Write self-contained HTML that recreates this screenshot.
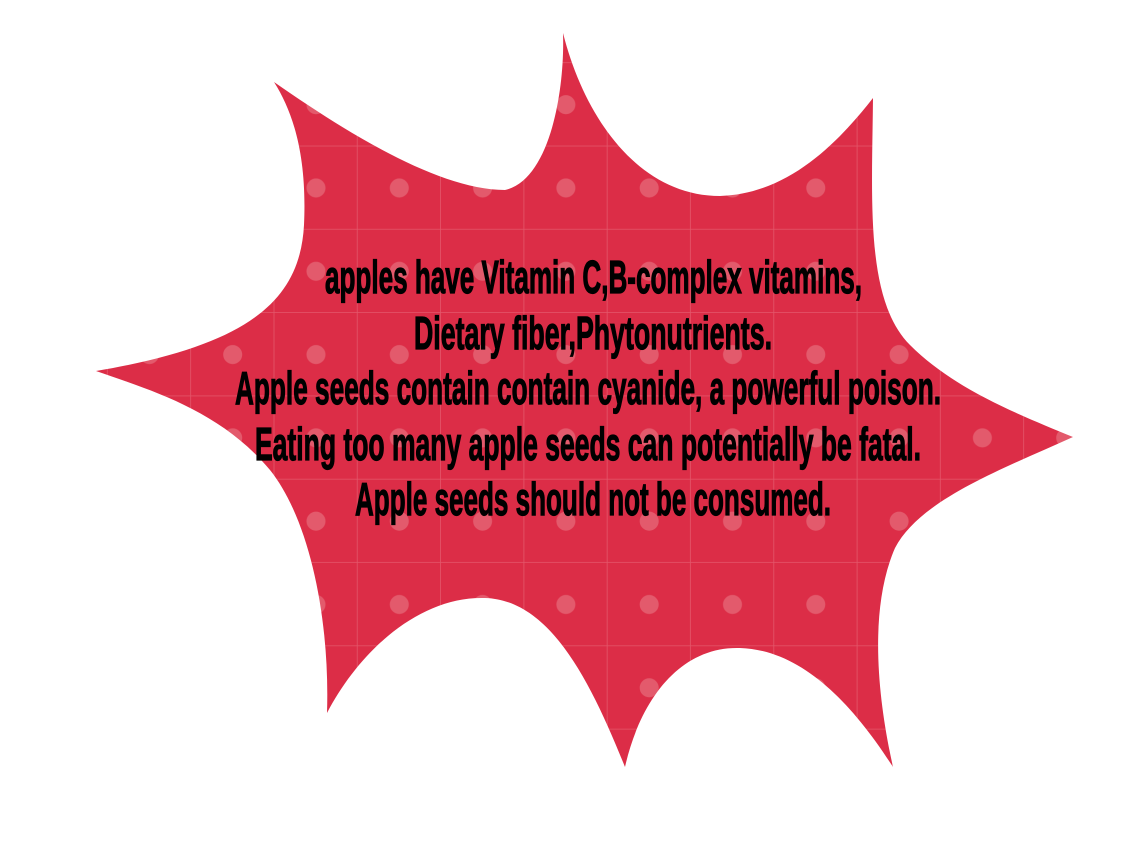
<!DOCTYPE html>
<html><head><meta charset="utf-8"><style>
html,body{margin:0;padding:0;background:#fff;width:1126px;height:859px;overflow:hidden}
svg{display:block}
text{font-family:"Liberation Sans Narrow","Liberation Sans",sans-serif;font-weight:bold;font-size:46px;fill:#000;stroke:#000;stroke-width:1.2px}
</style></head><body>
<svg width="1126" height="859" viewBox="0 0 1126 859" xmlns="http://www.w3.org/2000/svg">
<defs>
<pattern id="p" x="274.4" y="146.4" width="83.3" height="83.3" patternUnits="userSpaceOnUse">
<rect width="83.3" height="83.3" fill="#dc2d47"/>
<circle cx="41.6" cy="41.6" r="9.5" fill="#e35a6c"/>
<path d="M83 0V83.3M0 83H83.3" stroke="#e4566a" stroke-width="1" fill="none"/>
</pattern>
</defs>
<path fill="url(#p)" d="M96,371 C250,345 300,300 304,225 C307,160 295,115 274,82
C350,135 440,190 505,190 C550,180 565,90 563,33
C585,120 640,196 720,196 C790,194 840,140 873,98
C872,200 865,300 910,345 C955,390 1020,415 1073,437
C1000,470 920,500 895,548 C868,610 878,700 893,767
C850,700 800,650 740,648 C680,646 640,700 625,767
C590,680 550,600 485,598 C420,596 360,650 327,713
C330,620 310,520 270,470 C220,410 150,390 96,371Z"/>
<text x="325" y="293" textLength="537" lengthAdjust="spacingAndGlyphs">apples have Vitamin C,B-complex vitamins,</text>
<text x="414" y="349" textLength="358" lengthAdjust="spacingAndGlyphs">Dietary fiber,Phytonutrients.</text>
<text x="235" y="404" textLength="706" lengthAdjust="spacingAndGlyphs">Apple seeds contain contain cyanide, a powerful poison.</text>
<text x="255" y="460" textLength="666" lengthAdjust="spacingAndGlyphs">Eating too many apple seeds can potentially be fatal.</text>
<text x="355" y="515" textLength="476" lengthAdjust="spacingAndGlyphs">Apple seeds should not be consumed.</text>
</svg>
</body></html>
